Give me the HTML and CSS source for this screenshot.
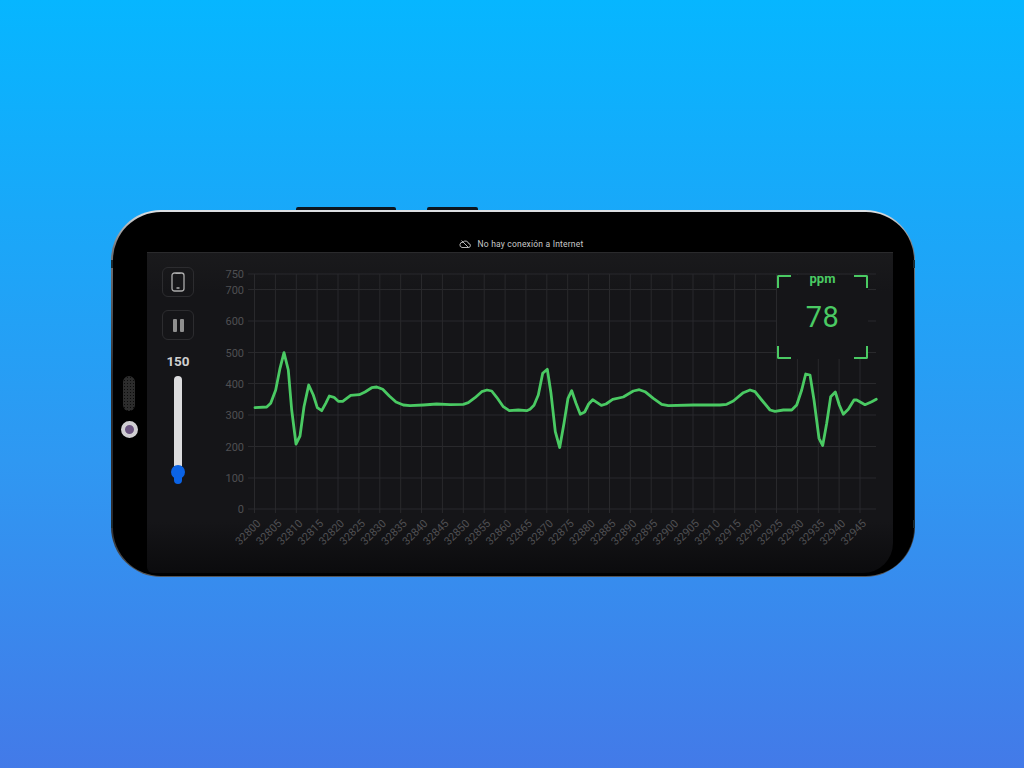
FILE: index.html
```html
<!DOCTYPE html>
<html lang="es">
<head>
  <meta charset="UTF-8" />
  <title>Monitor ppm</title>
  <link rel="stylesheet" href="styles.css">
</head>
<body>

  <div class="phone">
    <span class="side-btn btn-a"></span>
    <span class="side-btn btn-b"></span>
    <span class="band band-lt"></span>
    <span class="band band-lb"></span>
    <span class="band band-rt"></span>
    <span class="band band-rb"></span>
    <div class="phone-inner">

      <div class="status">
        <svg class="cloud" width="12" height="10" viewBox="0 0 12 10">
          <path d="M3 8.5h6.2a2 2 0 0 0 .4-4A3.2 3.2 0 0 0 4 3.2 2.7 2.7 0 0 0 3 8.5zM2.5 1.5l7 7" />
        </svg>
        <span>No hay conexión a Internet</span>
      </div>

      <div class="phone-body">
        <div class="bezel">
          <div class="speaker"></div>
          <div class="camera"></div>
        </div>

        <div class="screen">
          <div class="controls">
            <div class="ctrl-btn">
              <svg width="14" height="20" viewBox="0 0 14 20">
                <rect x="1" y="1" width="12" height="18" rx="2.5" />
                <path d="M4.5 1.4h5M5.5 16h3" />
              </svg>
            </div>
            <div class="ctrl-btn">
              <div class="pause"><span></span><span></span></div>
            </div>
            <div class="speed">150</div>
            <div class="slider">
              <div class="slider-track"></div>
              <div class="slider-thumb"></div>
              <div class="slider-tail"></div>
            </div>
          </div>

          <svg class="chart" width="684" height="320" viewBox="209 252 684 320">
            <g class="grid">
              <path d="M248 274H876M248 289.5H876M248 321H876M248 352.5H876M248 383.5H876M248 415H876M248 446.5H876M248 478H876M248 509H876" />
              <path d="M254.5 274V513M275.4 274V513M296.3 274V513M317.1 274V513M338 274V513M358.9 274V513M379.8 274V513M400.7 274V513M421.5 274V513M442.4 274V513M463.3 274V513M484.2 274V513M505.1 274V513M525.9 274V513M546.8 274V513M567.7 274V513M588.6 274V513M609.5 274V513M630.3 274V513M651.2 274V513M672.1 274V513M693 274V513M713.9 274V513M734.7 274V513M755.6 274V513M776.5 274V513M797.4 274V513M818.3 274V513M839.1 274V513M860 274V513" />
            </g>
            <g class="y-labels">
              <text x="244" y="278">750</text>
              <text x="244" y="293.5">700</text>
              <text x="244" y="325">600</text>
              <text x="244" y="356.5">500</text>
              <text x="244" y="387.5">400</text>
              <text x="244" y="419">300</text>
              <text x="244" y="450.5">200</text>
              <text x="244" y="482">100</text>
              <text x="244" y="513">0</text>
            </g>
            <g class="x-labels">
              <text transform="translate(261.5 524) rotate(-45)">32800</text>
              <text transform="translate(282.4 524) rotate(-45)">32805</text>
              <text transform="translate(303.3 524) rotate(-45)">32810</text>
              <text transform="translate(324.1 524) rotate(-45)">32815</text>
              <text transform="translate(345 524) rotate(-45)">32820</text>
              <text transform="translate(365.9 524) rotate(-45)">32825</text>
              <text transform="translate(386.8 524) rotate(-45)">32830</text>
              <text transform="translate(407.7 524) rotate(-45)">32835</text>
              <text transform="translate(428.5 524) rotate(-45)">32840</text>
              <text transform="translate(449.4 524) rotate(-45)">32845</text>
              <text transform="translate(470.3 524) rotate(-45)">32850</text>
              <text transform="translate(491.2 524) rotate(-45)">32855</text>
              <text transform="translate(512.1 524) rotate(-45)">32860</text>
              <text transform="translate(532.9 524) rotate(-45)">32865</text>
              <text transform="translate(553.8 524) rotate(-45)">32870</text>
              <text transform="translate(574.7 524) rotate(-45)">32875</text>
              <text transform="translate(595.6 524) rotate(-45)">32880</text>
              <text transform="translate(616.5 524) rotate(-45)">32885</text>
              <text transform="translate(637.3 524) rotate(-45)">32890</text>
              <text transform="translate(658.2 524) rotate(-45)">32895</text>
              <text transform="translate(679.1 524) rotate(-45)">32900</text>
              <text transform="translate(700 524) rotate(-45)">32905</text>
              <text transform="translate(720.9 524) rotate(-45)">32910</text>
              <text transform="translate(741.7 524) rotate(-45)">32915</text>
              <text transform="translate(762.6 524) rotate(-45)">32920</text>
              <text transform="translate(783.5 524) rotate(-45)">32925</text>
              <text transform="translate(804.4 524) rotate(-45)">32930</text>
              <text transform="translate(825.3 524) rotate(-45)">32935</text>
              <text transform="translate(846.1 524) rotate(-45)">32940</text>
              <text transform="translate(867 524) rotate(-45)">32945</text>
            </g>
            <polyline class="trace" points="255,407.7 266.7,407 270.7,403.3 275.7,390 280,368.3 284,352.7 288.3,370 291.7,410 296,444 300,436 304,406.7 308.7,385 313.3,395 317.3,407.7 321.7,410.7 325.7,403.3 329.3,396 334,397.3 338.3,401.3 342.7,401.3 346.7,398.3 350.7,395.3 359.3,394.7 365,392 371.7,387.7 376.7,387 382.7,389.3 389.3,396 396,402 403.3,405 410,405.7 423.3,405 436.7,404 450,404.7 463.3,404.3 468.3,402.7 475,397.7 481.7,391.7 487,390 491.7,391 496.7,397.3 503.3,406.7 509.3,410.7 518.3,410 526.7,410.7 530,409.3 534,405.3 538.3,395 542.7,373.3 547.3,369.3 551,393.3 555.3,431.7 559.7,447.5 564,423.3 568,398.3 571.7,390.7 576,403.3 580.3,414.3 584.7,412 588.7,404 592.7,399.7 601.3,405.3 606,404 612.7,399.3 623.3,397 633.3,391 639.3,389.7 645,391.7 653.3,398.3 661.7,404.3 668.3,405.7 693.3,405 720,405 726.7,404.3 733.3,401 743.3,392.7 750,390 755,391.7 761.7,400 770,410 775,411.3 783.3,410 791.7,410 796.7,405 801.7,390 805.7,374 810,375 814,400 819,438.3 822.7,445.5 826.7,423.3 830.7,396.7 835.3,392 839.3,405 843.3,414.3 848.3,409.3 854,400 856.7,400 865,404.7 871.7,401.7 876.3,399.3" />
          </svg>

          <div class="ppm-box">
            <span class="corner tl"></span>
            <span class="corner tr"></span>
            <span class="corner bl"></span>
            <span class="corner br"></span>
            <div class="ppm-label">ppm</div>
            <div class="ppm-value">78</div>
          </div>
        </div>
      </div>

    </div>
  </div>

</body>
</html>
```

FILE: styles.css
```css
html, body { height: 100%; }
body {
  margin: 0;
  padding: 210px 0 0 111px;
  box-sizing: border-box;
  overflow: hidden;
  font-family: Roboto, "Liberation Sans", sans-serif;
  background: linear-gradient(180deg, #06b6ff 0%, #2f98f2 60%, #437ae8 100%);
}

.phone {
  position: relative;
  width: 804px;
  height: 367px;
  box-sizing: border-box;
  padding: 1.5px;
  border-radius: 50px;
  background: linear-gradient(180deg, #dfe2e5 0%, #77797d 10%, #2b2c30 45%, #2b2c30 85%, #55575a 100%);
}
.phone-inner {
  display: flex;
  flex-direction: column;
  height: 100%;
  border-radius: 48px;
  background: #000;
  overflow: hidden;
}

.side-btn { position: absolute; top: -3px; height: 3px; background: #0c1620; border-radius: 2px 2px 0 0; }
.btn-a { left: 185px; width: 100px; }
.btn-b { left: 316px; width: 51px; }

.band { position: absolute; width: 2px; height: 8px; background: #1d2a30; }
.band-lt { left: 0; top: 50px; }
.band-lb { left: 0; top: 310px; }
.band-rt { right: 0; top: 50px; }
.band-rb { right: 0; top: 310px; }

.status {
  height: 40.5px;
  flex: none;
  display: flex;
  align-items: center;
  justify-content: center;
  gap: 7px;
  padding: 25px 0 0 0;
  box-sizing: border-box;
  margin-left: 16px;
  font-size: 8.5px;
  letter-spacing: 0.2px;
  color: #c9c9c9;
}
.cloud { fill: none; stroke: #c9c9c9; stroke-width: 0.9; }

.phone-body { flex: 1; display: flex; min-height: 0; }

.bezel {
  width: 34.5px;
  flex: none;
  display: flex;
  flex-direction: column;
  align-items: center;
  padding-top: 124px;
}
.speaker {
  width: 12px;
  height: 35px;
  margin-left: -1px;
  border-radius: 6px;
  background: #2c2c2c;
  background-image: radial-gradient(#0c0c0c 40%, transparent 45%);
  background-size: 3px 3px;
}
.camera {
  width: 9px;
  height: 9px;
  margin-top: 10px;
  margin-left: -1px;
  border: 4px solid #d0cfd2;
  border-radius: 50%;
  background: #6b5580;
}

.screen {
  position: relative;
  flex: 1;
  display: flex;
  margin-bottom: 3px;
  margin-right: 21px;
  border-top: 1px solid #2a2a2c;
  border-radius: 0 0 30px 6px;
  background: linear-gradient(180deg, #1a1a1c 0%, #151518 12%, #151518 84%, #0b0b0d 100%);
  overflow: hidden;
}

.controls {
  width: 62px;
  flex: none;
  box-sizing: border-box;
  padding: 14px 0 0 15px;
  display: flex;
  flex-direction: column;
}
.ctrl-btn {
  width: 32px;
  height: 30px;
  box-sizing: border-box;
  margin-bottom: 13px;
  display: flex;
  align-items: center;
  justify-content: center;
  border: 1px solid #2c2c2f;
  border-radius: 6px;
}
.ctrl-btn svg { fill: none; stroke: #ababab; stroke-width: 1.3; }
.pause { display: flex; gap: 3px; }
.pause span { width: 4px; height: 13px; background: #8f8f8f; border-radius: 1px; }

.speed {
  width: 32px;
  text-align: center;
  font-size: 13.5px;
  font-weight: 700;
  line-height: 16px;
  color: #cfcfcf;
}
.slider {
  width: 32px;
  margin-top: 7px;
  display: flex;
  flex-direction: column;
  align-items: center;
}
.slider-track { width: 8px; height: 90px; background: #dcdcde; border-radius: 4px 4px 0 0; }
.slider-thumb { width: 14px; height: 14px; margin-top: -1px; background: #0b63e5; border-radius: 50%; }
.slider-tail { width: 8px; height: 8px; margin-top: -3px; background: #0b63e5; border-radius: 0 0 4px 4px; }

.chart { flex: none; display: block; margin-top: -1px; }
.grid path { fill: none; stroke: #29292c; stroke-width: 1; }
.y-labels text { fill: #4f4f52; font-size: 11px; text-anchor: end; }
.x-labels text { fill: #4f4f52; font-size: 11px; text-anchor: end; }
.trace { fill: none; stroke: #4aca63; stroke-width: 2.8; stroke-linejoin: round; stroke-linecap: round; }

.ppm-box {
  position: absolute;
  left: 630px;
  top: 22px;
  width: 91px;
  height: 84px;
  background: #151518;
  color: #4aca63;
  text-align: center;
}
.ppm-label { margin-top: -4px; font-size: 13px; font-weight: 700; line-height: 16px; }
.ppm-value { margin-top: 12px; font-size: 29px; line-height: 36px; letter-spacing: 0.5px; }
.corner { position: absolute; width: 12px; height: 11px; border: 0 solid #4aca63; }
.tl { left: 0; top: 0; border-width: 2.5px 0 0 2.5px; border-top-left-radius: 2px; }
.tr { right: 0; top: 0; border-width: 2.5px 2.5px 0 0; border-top-right-radius: 2px; }
.bl { left: 0; bottom: 0; border-width: 0 0 2.5px 2.5px; border-bottom-left-radius: 2px; }
.br { right: 0; bottom: 0; border-width: 0 2.5px 2.5px 0; border-bottom-right-radius: 2px; }
```
